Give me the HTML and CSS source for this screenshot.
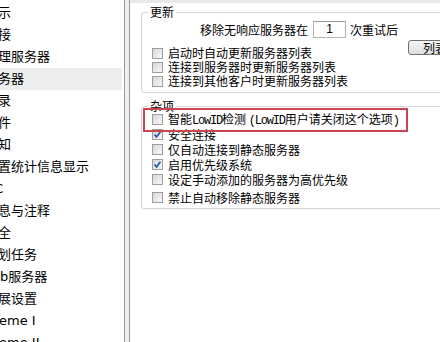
FILE: index.html
```html
<!DOCTYPE html>
<html lang="zh-CN">
<head>
    <meta charset="UTF-8">
    <title>选项 - 服务器</title>
    <link rel="stylesheet" href="styles.css">
</head>
<body>
    <div class="window">
        <!-- Options tree -->
        <ul class="nav">
            <li>显示</li>
            <li>连接</li>
            <li>代理服务器</li>
            <li class="active">服务器</li>
            <li>目录</li>
            <li>文件</li>
            <li>通知</li>
            <li>设置统计信息显示</li>
            <li class="short">IRC</li>
            <li>消息与注释</li>
            <li>安全</li>
            <li>计划任务</li>
            <li class="wide">Web服务器</li>
            <li>扩展设置</li>
            <li class="wide">Xtreme I</li>
            <li class="wide">Xtreme II</li>
        </ul>

        <div class="splitter"></div>

        <!-- Server page -->
        <div class="page">
            <div class="topbar"></div>

            <fieldset class="group group-update">
                <legend>更新</legend>
                <div class="retry-row">
                    <span>移除无响应服务器在</span>
                    <input type="text" class="retry-input" value="1">
                    <span>次重试后</span>
                </div>
                <div class="update-body">
                    <div class="checks">
                        <label class="check"><span class="box"></span><span>启动时自动更新服务器列表</span></label>
                        <label class="check"><span class="box"></span><span>连接到服务器时更新服务器列表</span></label>
                        <label class="check"><span class="box"></span><span>连接到其他客户时更新服务器列表</span></label>
                    </div>
                    <button class="btn">列表...</button>
                </div>
            </fieldset>

            <fieldset class="group group-misc">
                <legend>杂项</legend>
                <div class="checks misc-list">
                    <label class="check highlight"><span class="box"></span><span>智能<span class="latin">LowID</span>检测 <span class="latin">(LowID</span>用户请关闭这个选项<span class="latin">)</span></span><span class="mark"></span></label>
                    <label class="check"><span class="box"><svg width="9" height="9" viewBox="0 0 9 9"><polyline points="1.5,4.5 3.5,6.8 7.5,1.8" /></svg></span><span>安全连接</span></label>
                    <label class="check"><span class="box"></span><span>仅自动连接到静态服务器</span></label>
                    <label class="check"><span class="box"><svg width="9" height="9" viewBox="0 0 9 9"><polyline points="1.5,4.5 3.5,6.8 7.5,1.8" /></svg></span><span>启用优先级系统</span></label>
                    <label class="check"><span class="box"></span><span>设定手动添加的服务器为高优先级</span></label>
                    <label class="check last"><span class="box"></span><span>禁止自动移除静态服务器</span></label>
                </div>
            </fieldset>
        </div>
    </div>
</body>
</html>
```

FILE: styles.css
```css
* {
    margin: 0;
    padding: 0;
    box-sizing: border-box;
}

body {
    width: 440px;
    height: 342px;
    overflow: hidden;
    background: #ffffff;
    color: #000000;
    font-family: "Noto Sans CJK SC", sans-serif;
}

.window {
    display: flex;
    height: 342px;
}

/* Options tree */
.nav {
    list-style: none;
    width: 124px;
    flex-shrink: 0;
    overflow: hidden;
    padding-top: 2px;
    font-family: "DejaVu Sans", "Noto Sans CJK SC", sans-serif;
    font-size: 13px;
}

.nav li {
    height: 22px;
    line-height: 22px;
    margin-left: -15px;
    white-space: nowrap;
}

.nav li.short {
    margin-left: -18px;
}

.nav li.wide {
    margin-left: -20px;
}

.nav li.active {
    background: #eeeeee;
    margin-right: 2px;
}

.splitter {
    width: 6px;
    flex-shrink: 0;
    background: #efefef;
    border-left: 1px solid #999999;
    border-right: 1px solid #999999;
}

/* Right page */
.page {
    flex: 1;
    overflow: hidden;
    font-size: 12px;
}

.topbar {
    height: 3px;
    background: #e9e9e9;
}

.group {
    margin: 0 -30px 0 11px;
    border: 1px solid #d3d3d3;
    border-radius: 3px;
    padding: 0;
}

.group legend {
    margin-left: 6px;
    padding: 0 2px;
    line-height: 14px;
    font-size: 12px;
}

.group-update {
    margin-top: 2px;
    padding-bottom: 4px;
}

.retry-row {
    display: flex;
    align-items: center;
    height: 18px;
    margin-top: 1px;
    padding-left: 58px;
    white-space: nowrap;
}

.retry-input {
    width: 33px;
    height: 17px;
    margin: 0 4px 0 5px;
    border: 1px solid #b4b4b4;
    border-top-color: #9a9a9a;
    background: #ffffff;
    font-family: "Liberation Sans", sans-serif;
    font-size: 12px;
    text-align: center;
    outline: none;
}

.update-body {
    display: flex;
    align-items: flex-start;
    margin-top: 2px;
}

.update-body .checks {
    width: 266px;
    padding-top: 6px;
}

.btn {
    width: 60px;
    height: 15px;
    padding-left: 14px;
    text-align: left;
    border: 1px solid #6f6f6f;
    border-radius: 3px;
    background: linear-gradient(#f6f6f6, #dedede);
    font-family: "Noto Sans CJK SC", sans-serif;
    font-size: 12px;
    line-height: 13px;
    color: #000000;
}

.checks {
    padding-left: 10px;
}

.check {
    display: flex;
    align-items: center;
    height: 14px;
    line-height: 14px;
    white-space: pre;
}

.box {
    width: 11px;
    height: 11px;
    margin-right: 5px;
    flex-shrink: 0;
    border: 1px solid #9e9e9e;
    background: linear-gradient(135deg, #d6d6d6, #f8f8f8);
    display: flex;
    align-items: center;
    justify-content: center;
}

.box polyline {
    fill: none;
    stroke: #2d58a8;
    stroke-width: 1.7;
}

.latin {
    font-family: "Liberation Mono", monospace;
    letter-spacing: -1.2px;
}

.group-misc {
    margin-top: 6px;
    padding-bottom: 3px;
}

.misc-list {
    margin-top: -1px;
}

.misc-list .check {
    height: 15px;
    line-height: 15px;
}

.misc-list .check.last {
    margin-top: 3px;
}

.highlight {
    position: relative;
}

/* red annotation frame */
.highlight .mark {
    position: absolute;
    left: -9px;
    top: -4px;
    width: 265px;
    height: 24px;
    border: 2px solid #c94550;
}
```
